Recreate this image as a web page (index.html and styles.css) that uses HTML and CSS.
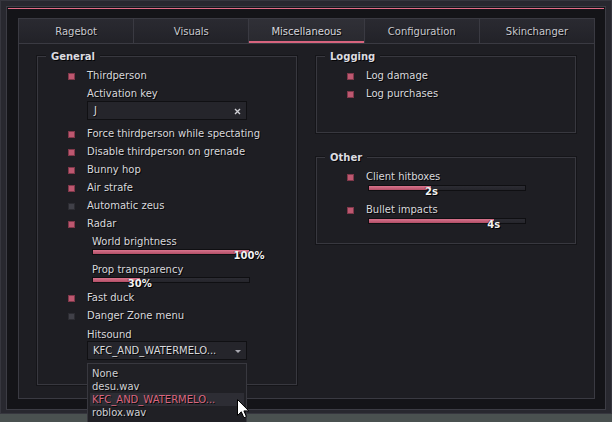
FILE: index.html
```html
<!DOCTYPE html>
<html>
<head>
<meta charset="utf-8">
<link rel="stylesheet" href="styles.css">
</head>
<body>
<div class="window">
  <div class="inner">
    <div class="accent"></div>
    <div class="panel">
      <div class="tabs">
        <div class="tab">Ragebot</div>
        <div class="tab">Visuals</div>
        <div class="tab active">Miscellaneous</div>
        <div class="tab">Configuration</div>
        <div class="tab">Skinchanger</div>
      </div>
      <div class="content">
        <div class="group general">
          <span class="group-title">General</span>
          <div class="row"><span class="cb"></span>Thirdperson</div>
          <div class="sub label">Activation key</div>
          <div class="sub keybox">
            <span class="keyval">J</span>
            <svg class="clear" width="7" height="7" viewBox="0 0 7 7"><path d="M1 1 L6 6 M6 1 L1 6" stroke="#cfcfd4" stroke-width="1.4" fill="none"/></svg>
          </div>
          <div class="row"><span class="cb"></span>Force thirdperson while spectating</div>
          <div class="row"><span class="cb"></span>Disable thirdperson on grenade</div>
          <div class="row"><span class="cb"></span>Bunny hop</div>
          <div class="row"><span class="cb"></span>Air strafe</div>
          <div class="row"><span class="cb off"></span>Automatic zeus</div>
          <div class="row"><span class="cb"></span>Radar</div>
          <div class="slider wide">
            <div class="label">World brightness</div>
            <div class="track"><div class="fill" style="width:100%"></div><span class="val" style="left:100%">100%</span></div>
          </div>
          <div class="slider wide">
            <div class="label">Prop transparency</div>
            <div class="track"><div class="fill" style="width:30%"></div><span class="val" style="left:30%">30%</span></div>
          </div>
          <div class="row"><span class="cb"></span>Fast duck</div>
          <div class="row"><span class="cb off"></span>Danger Zone menu</div>
          <div class="sub label low">Hitsound</div>
          <div class="sub dropdown">
            <span class="ddval">KFC_AND_WATERMELO...</span>
            <span class="caret"></span>
            <div class="ddlist">
              <div class="dditem">None</div>
              <div class="dditem">desu.wav</div>
              <div class="dditem selected">KFC_AND_WATERMELO...</div>
              <div class="dditem">roblox.wav</div>
              <svg class="cursor" width="13" height="20" viewBox="0 0 13 20"><path d="M0.5 0.5 L0.5 16.5 L4.3 12.8 L6.9 18.8 L9.4 17.7 L6.9 11.9 L11.8 11.9 Z" fill="#ffffff" stroke="#000000" stroke-width="1" stroke-linejoin="round"/></svg>
            </div>
          </div>
        </div>
        <div class="col">
          <div class="group logging">
            <span class="group-title">Logging</span>
            <div class="row"><span class="cb"></span>Log damage</div>
            <div class="row"><span class="cb"></span>Log purchases</div>
          </div>
          <div class="group other">
            <span class="group-title">Other</span>
            <div class="row"><span class="cb"></span>Client hitboxes</div>
            <div class="slider narrow gap">
              <div class="track"><div class="fill" style="width:40%"></div><span class="val" style="left:40%">2s</span></div>
            </div>
            <div class="row"><span class="cb"></span>Bullet impacts</div>
            <div class="slider narrow">
              <div class="track"><div class="fill" style="width:80%"></div><span class="val" style="left:80%">4s</span></div>
            </div>
          </div>
        </div>
      </div>
    </div>
  </div>
</div>
</body>
</html>
```
FILE: styles.css
```css
* { box-sizing: border-box; }
html, body { margin: 0; padding: 0; }
body {
  background: #4a5150;
  width: 612px;
  height: 422px;
  overflow: hidden;
  font-family: "DejaVu Sans", "Noto Sans", sans-serif;
  font-size: 10px;
  line-height: 12px;
  color: #d8d8dc;
  text-shadow: 1px 1px 0 rgba(0, 0, 0, 0.85);
}
.window {
  width: 612px;
  height: 414px;
  background: #28282f;
  border: 1px solid #36363e;
  padding: 5px 5px 3px 5px;
  display: flex;
}
.inner {
  flex: 1;
  display: flex;
  flex-direction: column;
  background: #141418;
  border: 1px solid #3c3c44;
  padding: 1px 1px 0 1px;
}
.accent {
  flex: none;
  height: 1px;
  background: #e06c86;
}
.panel {
  flex: 1;
  margin: 9px 9px 10px 10px;
  border: 1px solid #3a3a42;
  background: #1e1e23;
  display: flex;
  flex-direction: column;
}
.tabs {
  display: flex;
  height: 25px;
  border-bottom: 1px solid #3a3a42;
}
.tab {
  flex: 1;
  display: flex;
  align-items: center;
  justify-content: center;
  padding-top: 1px;
  border-right: 1px solid #3a3a42;
  background: linear-gradient(#2a2a31, #222228);
  color: #c8c8ce;
}
.tab:last-child { border-right: none; }
.tab.active {
  background: linear-gradient(#303037, #29292f);
  box-shadow: inset 0 -2px 0 #d8647e;
  color: #d6d6dc;
}
.content {
  display: flex;
  gap: 19px;
  padding: 12px 18px 0 18px;
}
.group {
  position: relative;
  width: 260px;
  border: 1px solid #38383f;
  box-shadow: 0 0 0 1px #151519;
  padding: 9px 0 0 30px;
}
.general { height: 329px; }
.col { display: flex; flex-direction: column; width: 260px; }
.logging { height: 77px; }
.other { height: 87px; margin-top: 24px; }
.group-title {
  position: absolute;
  top: -6px;
  left: 8px;
  padding: 0 5px;
  background: #1e1e23;
  font-weight: bold;
  color: #dcdce0;
}
.row {
  height: 18px;
  display: flex;
  align-items: center;
  padding-top: 1px;
}
.cb {
  flex: none;
  width: 7px;
  height: 7px;
  margin-right: 12px;
  margin-top: 1px;
  background: #bd5870;
  border: 1px solid #80384a;
}
.cb.off {
  background: #404048;
  border-color: #2c2c32;
}
.sub { margin-left: 19px; }
.label {
  height: 17px;
  display: flex;
  align-items: center;
  padding-top: 2px;
}
.label.low { padding-top: 5px; }
.keybox {
  width: 160px;
  height: 19px;
  margin-bottom: 4px;
  background: #25252b;
  border: 1px solid #101013;
  display: flex;
  align-items: center;
  justify-content: space-between;
  padding: 1px 5px 0 6px;
}
.slider { width: 158px; margin-bottom: 5px; }
.slider.wide { margin-left: 24px; }
.slider.narrow { margin-left: 21px; margin-bottom: 0; }
.slider.narrow.gap { margin-bottom: 9px; }
.track {
  position: relative;
  height: 6px;
  background: linear-gradient(#2c2c33, #25252b);
  border: 1px solid #0f0f12;
}
.fill {
  height: 100%;
  background: linear-gradient(#d8748d, #b24e66);
}
.val {
  position: absolute;
  top: 0;
  transform: translateX(-50%);
  font-weight: bold;
  color: #f2f2f2;
  text-shadow: 1px 1px 0 #000, -1px 0 0 rgba(0,0,0,0.5);
  white-space: nowrap;
}
.dropdown {
  position: relative;
  width: 160px;
  height: 19px;
  background: #25252b;
  border: 1px solid #101013;
  display: flex;
  align-items: center;
  justify-content: space-between;
  padding: 1px 5px 0 5px;
}
.caret {
  width: 0;
  height: 0;
  border-left: 3px solid transparent;
  border-right: 3px solid transparent;
  border-top: 3px solid #a8a8b0;
}
.ddlist {
  position: absolute;
  top: 21px;
  left: -1px;
  width: 160px;
  background: #202025;
  border: 1px solid #38383f;
  padding: 3px 2px 12px 2px;
  z-index: 5;
}
.dditem {
  height: 13px;
  line-height: 14px;
  padding-left: 2px;
  color: #cfcfd4;
}
.dditem.selected {
  background: #2d2d34;
  color: #d9667f;
}
.cursor {
  position: absolute;
  left: 149px;
  top: 35px;
}
```
